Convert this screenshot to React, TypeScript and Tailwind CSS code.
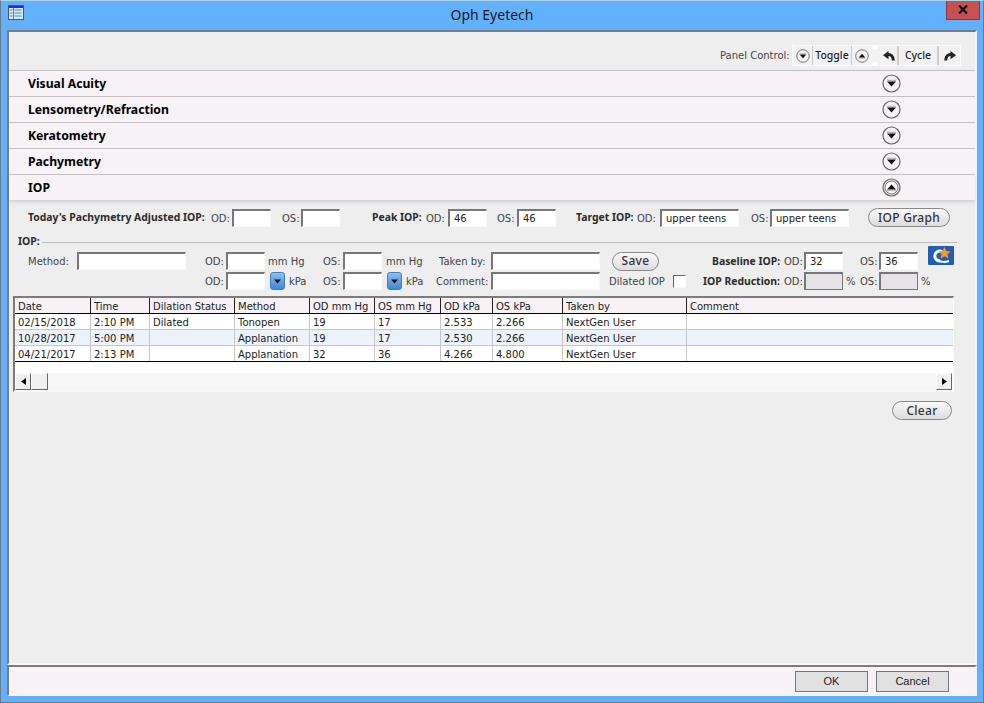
import React from "react";

const font = { fontFamily: '"Noto Sans", "DejaVu Sans", sans-serif' };
const reg = { fontFamily: '"DejaVu Sans", "Noto Sans", sans-serif' };

function Chevron({ up = false, ring = false, size = 19 }: { up?: boolean; ring?: boolean; size?: number }) {
  return (
    <svg width={size} height={size} viewBox="0 0 19 19" className="shrink-0">
      <circle cx="9.5" cy="9.5" r="8.5" fill={ring ? "#dcdcdc" : "#f4f2f4"} stroke="#666" strokeWidth="1.2" />
      {ring && <circle cx="9.5" cy="9.5" r="6.4" fill="#fff" stroke="#777" strokeWidth="0.9" />}
      {up ? <path d="M5 11.5h9L9.5 6.5z" fill="#111" /> : <path d="M5 7.5h9L9.5 12.5z" fill="#111" />}
      <path d={up ? "M5 12.7h9" : "M5 6.3h9"} stroke="#888" strokeWidth="0.7" />
    </svg>
  );
}

function Section({ title, up }: { title: string; up?: boolean }) {
  return (
    <div className="flex h-[26px] items-center border-t border-[#c4c0c4] bg-[#f6f2f6] pl-[19px] pr-[74px]">
      <span className="flex-1 pt-[1px] text-[12.2px] font-bold text-black">{title}</span>
      <Chevron up={up} ring={up} />
    </div>
  );
}

function Input({ w = 39, value, gray, ml = 0 }: { w?: number; value?: string; gray?: boolean; ml?: number }) {
  return (
    <div
      style={{ width: w, marginLeft: ml, ...reg }}
      className={`flex h-[18px] shrink-0 items-center border border-t-2 border-l-2 pl-[4px] text-[10px] text-[#222] ${
        gray ? "border-[#777] bg-[#e6e3e6]" : "border-[#fafafa] border-t-[#777] border-l-[#777] bg-white"
      }`}
    >
      {value}
    </div>
  );
}

function Label({ children, ml = 0, bold, w }: { children: React.ReactNode; ml?: number; bold?: boolean; w?: number }) {
  return (
    <span
      style={bold ? { marginLeft: ml, width: w } : { marginLeft: ml, width: w, ...reg }}
      className={`shrink-0 whitespace-nowrap pt-[1px] ${bold ? "text-[10.4px] font-bold text-[#2b2b2b]" : "text-[10px] text-[#444]"}`}
    >
      {children}
    </span>
  );
}

function Pill({ children, w, ml = 0 }: { children: React.ReactNode; w: number; ml?: number }) {
  return (
    <div
      style={{ width: w, marginLeft: ml }}
      className="flex h-[19px] shrink-0 items-center justify-center rounded-full border border-[#888] bg-gradient-to-b from-[#fafafa] to-[#dcdcdc] text-[12px] font-medium tracking-[0.3px] text-[#333]"
    >
      {children}
    </div>
  );
}

function Drop({ ml = 0 }: { ml?: number }) {
  return (
    <div
      style={{ marginLeft: ml }}
      className="flex h-[18px] w-[15px] shrink-0 items-center justify-center rounded-[3px] border border-[#3d7fc4] bg-gradient-to-b from-[#8cc0f2] to-[#3f86d2]"
    >
      <svg width="7" height="5" viewBox="0 0 7 5"><path d="M0 0.5h7L3.5 4.5z" fill="#111" /></svg>
    </div>
  );
}

const cols = [76, 59, 85, 75, 65, 66, 52, 70, 124];
const headers = ["Date", "Time", "Dilation Status", "Method", "OD mm Hg", "OS mm Hg", "OD kPa", "OS kPa", "Taken by", "Comment"];
const rows = [
  ["02/15/2018", "2:10 PM", "Dilated", "Tonopen", "19", "17", "2.533", "2.266", "NextGen User", ""],
  ["10/28/2017", "5:00 PM", "", "Applanation", "19", "17", "2.530", "2.266", "NextGen User", ""],
  ["04/21/2017", "2:13 PM", "", "Applanation", "32", "36", "4.266", "4.800", "NextGen User", ""],
];

function ScrollBtn({ dir }: { dir: "l" | "r" }) {
  return (
    <div className="flex h-[17px] w-[16px] shrink-0 items-center justify-center border border-[#fff] border-r-[#666] border-b-[#666] bg-[#f0f0f0]">
      <svg width="5" height="7" viewBox="0 0 5 7">
        <path d={dir === "l" ? "M5 0v7L0 3.5z" : "M0 0v7l5-3.5z"} fill="#000" />
      </svg>
    </div>
  );
}

function BoldArrow({ flip }: { flip?: boolean }) {
  return (
    <svg width="12" height="10" viewBox="0 0 12 10" style={flip ? { transform: "scaleX(-1)" } : undefined}>
      <path d="M0 4.2L5.5 0V8.2Z" fill="#222" />
      <path d="M4.5 3.6C8 3.2 10.3 5 10.3 9.5" fill="none" stroke="#222" strokeWidth="3" />
    </svg>
  );
}

export default function App() {
  return (
    <div style={font} className="flex h-[703px] w-[984px] flex-col overflow-hidden border border-[#6b7a88] border-t-[#a9d3e8] bg-[#62b1ff] px-[6px] pb-[6px]">
      {/* Title bar */}
      <div className="relative flex h-[29px] shrink-0 items-center justify-center">
        <svg width="16" height="15" viewBox="0 0 16 15" className="absolute left-[1px] top-[4px]">
          <rect x="0.5" y="0.5" width="15" height="14" fill="#dfe8f5" stroke="#555" />
          <rect x="1" y="1" width="14" height="2" fill="#2a2ae0" />
          <path d="M1.5 5h3M1.5 8h3M1.5 11h3M6.5 5h7M6.5 8h7M6.5 11h7" stroke="#6fb0e8" strokeWidth="1.5" />
          <path d="M5.5 3v11" stroke="#777" />
        </svg>
        <span className="mb-[3px] text-[14px] text-[#1a1a1a]">Oph Eyetech</span>
        <div className="absolute right-[-3px] top-[-1px] flex h-[20px] w-[34px] items-center justify-center border border-[#8a3a3a] border-t-0 bg-[#c75050]">
          <svg width="10" height="9" viewBox="0 0 10 9"><path d="M1 .5l8 8M9 .5l-8 8" stroke="#111" strokeWidth="2.2" /></svg>
        </div>
      </div>

      {/* Main panel */}
      <div className="flex min-h-0 flex-1 flex-col border-t-2 border-l-2 border-[#7c7c7c] border-r-2 border-r-[#f4f4f4] border-b-2 border-b-[#f8f8f8] bg-[#eeeeee]">
        {/* Panel control */}
        <div className="flex h-[38px] shrink-0 items-end justify-end pb-[4px] pr-[14px]">
          <span style={reg} className="mb-[3px] w-[72px] whitespace-nowrap text-[10px] text-[#444]">Panel Control:</span>
          <div className="relative flex h-[21px] items-center overflow-hidden border border-[#fafafa] bg-[#f2f2f2] text-[10.5px] font-medium text-[#222]">
            <div className="flex h-full w-[20px] items-center justify-center border-r border-[#cfc9c9]"><Chevron size={14} /></div>
            <div className="flex h-full w-[39px] items-center justify-center border-r border-[#cfc9c9]">Toggle</div>
            <div className="flex h-full w-[47px] items-center gap-[14px] border-r-2 border-[#cfc9c9] pl-[3px]">
              <Chevron up size={14} />
              <BoldArrow />
            </div>
            <div className="flex h-full w-[40px] items-center justify-center border-r-2 border-[#cfc9c9]">Cycle</div>
            <div className="flex h-full w-[21px] items-center justify-center">
              <BoldArrow flip />
            </div>
            <div className="absolute left-[79px] top-[-3px] h-[6px] w-[6px] rounded-full bg-white" />
            <div className="absolute bottom-[-3px] left-[79px] h-[6px] w-[6px] rounded-full bg-white" />
          </div>
        </div>

        <Section title="Visual Acuity" />
        <Section title="Lensometry/Refraction" />
        <Section title="Keratometry" />
        <Section title="Pachymetry" />
        <div className="shadow-[0_2px_3px_rgba(0,0,0,0.12)]"><Section title="IOP" up /></div>

        {/* Top form row */}
        <div className="mt-[8px] flex h-[19px] items-center pl-[19px]">
          <Label bold w={183}>Today's Pachymetry Adjusted IOP:</Label>
          <Label w={21}>OD:</Label>
          <Input />
          <Label ml={11} w={19}>OS:</Label>
          <Input />
          <Label bold ml={32} w={54}>Peak IOP:</Label>
          <Label w={22}>OD:</Label>
          <Input value="46" />
          <Label ml={10} w={20}>OS:</Label>
          <Input value="46" />
          <Label bold ml={20} w={61}>Target IOP:</Label>
          <Label w={23}>OD:</Label>
          <Input w={79} value="upper teens" />
          <Label ml={12} w={19}>OS:</Label>
          <Input w={79} value="upper teens" />
          <Pill w={82} ml={19}>IOP Graph</Pill>
        </div>

        {/* Divider */}
        <div className="mt-[7px] flex h-[16px] items-center pl-[9px] pr-[18px]">
          <span className="text-[10.4px] font-bold text-[#2b2b2b]">IOP:</span>
          <div className="ml-[2px] h-px flex-1 bg-[#c0c0c0]" />
        </div>

        {/* IOP rows */}
        <div className="relative mt-[2px] flex h-[18px] items-center pl-[19px]">
          <Label w={49}>Method:</Label>
          <Input w={109} />
          <Label ml={19} w={21}>OD:</Label>
          <Input />
          <Label ml={3} w={55}>mm Hg</Label>
          <Label w={20}>OS:</Label>
          <Input />
          <Label ml={4} w={53}>mm Hg</Label>
          <Label w={52}>Taken by:</Label>
          <Input w={109} />
          <Pill w={47} ml={12}>Save</Pill>
          <Label bold ml={53} w={72}>Baseline IOP:</Label>
          <Label w={20}>OD:</Label>
          <Input value="32" />
          <Label ml={17} w={19}>OS:</Label>
          <Input value="36" />
          <div className="absolute left-[919px] top-[-6px] flex h-[19px] w-[26px] items-center justify-center rounded-[1px] bg-[#1f5fae]">
            <svg width="24" height="19" viewBox="0 0 24 19">
              <path d="M13 5.5A5 5 0 1 0 11 15" fill="none" stroke="#fff" strokeWidth="3" />
              <path d="M9 14c3 2.5 7 2.5 11 1" fill="none" stroke="#fff" strokeWidth="2" />
              <path d="M15.5 1l1.9 4 4.3.4-3.3 2.9 1 4.2-3.9-2.3-3.9 2.3 1-4.2-3.3-2.9 4.3-.4z" fill="#f59a23" />
            </svg>
          </div>
        </div>
        <div className="mt-[2px] flex h-[18px] items-center pl-[196px]">
          <Label w={21}>OD:</Label>
          <Input />
          <Drop ml={5} />
          <Label ml={4} w={34}>kPa</Label>
          <Label w={20}>OS:</Label>
          <Input />
          <Drop ml={5} />
          <Label ml={4} w={30}>kPa</Label>
          <Label w={55}>Comment:</Label>
          <Input w={109} />
          <Label ml={9} w={64}>Dilated IOP</Label>
          <div className="h-[13px] w-[13px] shrink-0 border border-[#666] border-r-[#fafafa] border-b-[#fafafa] bg-white" />
          <Label bold ml={17} w={81}>IOP Reduction:</Label>
          <Label w={20}>OD:</Label>
          <Input gray />
          <Label ml={3} w={14}>%</Label>
          <Label w={19}>OS:</Label>
          <Input gray />
          <Label ml={3}>%</Label>
        </div>

        {/* Table */}
        <div style={reg} className="ml-[4px] mt-[6px] flex w-[941px] flex-col border-t-2 border-l-2 border-[#7c7c7c] border-r border-r-[#fafafa] border-b-2 border-b-[#f8f8f8] bg-white text-[10px] text-[#222]">
          <div className="flex h-[16px] border-b border-black bg-[#f6f2f6]">
            {headers.map((h, i) => (
              <div key={h} style={i < 9 ? { width: cols[i] } : undefined} className={`flex items-center pl-[3px] pt-[1px] ${i < 9 ? "shrink-0 border-r border-[#222]" : "flex-1"}`}>{h}</div>
            ))}
          </div>
          {rows.map((r, ri) => (
            <div key={ri} className={`flex h-[16px] border-b ${ri === 2 ? "border-black" : "border-[#c6c6d0]"} ${ri === 1 ? "bg-[#edf2fd]" : "bg-white"}`}>
              {r.map((c, i) => (
                <div key={i} style={i < 9 ? { width: cols[i] } : undefined} className={`flex items-center pl-[3px] pt-[1px] ${i < 9 ? "shrink-0 border-r border-[#c6c6c6]" : "flex-1"}`}>{c}</div>
              ))}
            </div>
          ))}
          <div className="h-[11px]" />
          <div className="flex h-[17px] items-center bg-[#f6f6f6]">
            <ScrollBtn dir="l" />
            <div className="h-[17px] w-[17px] border border-[#fff] border-r-[#666] border-b-[#666] bg-[#f0f0f0]" />
            <div className="flex-1" />
            <ScrollBtn dir="r" />
            <div className="w-[1px]" />
          </div>
        </div>

        <div className="mt-[9px] flex justify-end pr-[23px]">
          <Pill w={60}>Clear</Pill>
        </div>
        <div className="flex-1" />
      </div>

      {/* Footer */}
      <div className="flex h-[31px] shrink-0 items-start justify-end border-b border-[#f8f8f8] bg-[#f6f2f6] pt-[4px] pr-[26px] text-[11px] text-[#222] border-l-2 border-l-[#7c7c7c] border-t-2 border-t-[#7c7c7c] border-r-2 border-r-[#f4f4f4]">
        <div style={{ fontFamily: '"Liberation Sans", sans-serif' }} className="flex h-[21px] w-[73px] items-center justify-center border border-[#777] bg-[#e1e1e1]">OK</div>
        <div style={{ fontFamily: '"Liberation Sans", sans-serif' }} className="ml-[8px] flex h-[21px] w-[73px] items-center justify-center border border-[#777] bg-[#e1e1e1]">Cancel</div>
      </div>
    </div>
  );
}
